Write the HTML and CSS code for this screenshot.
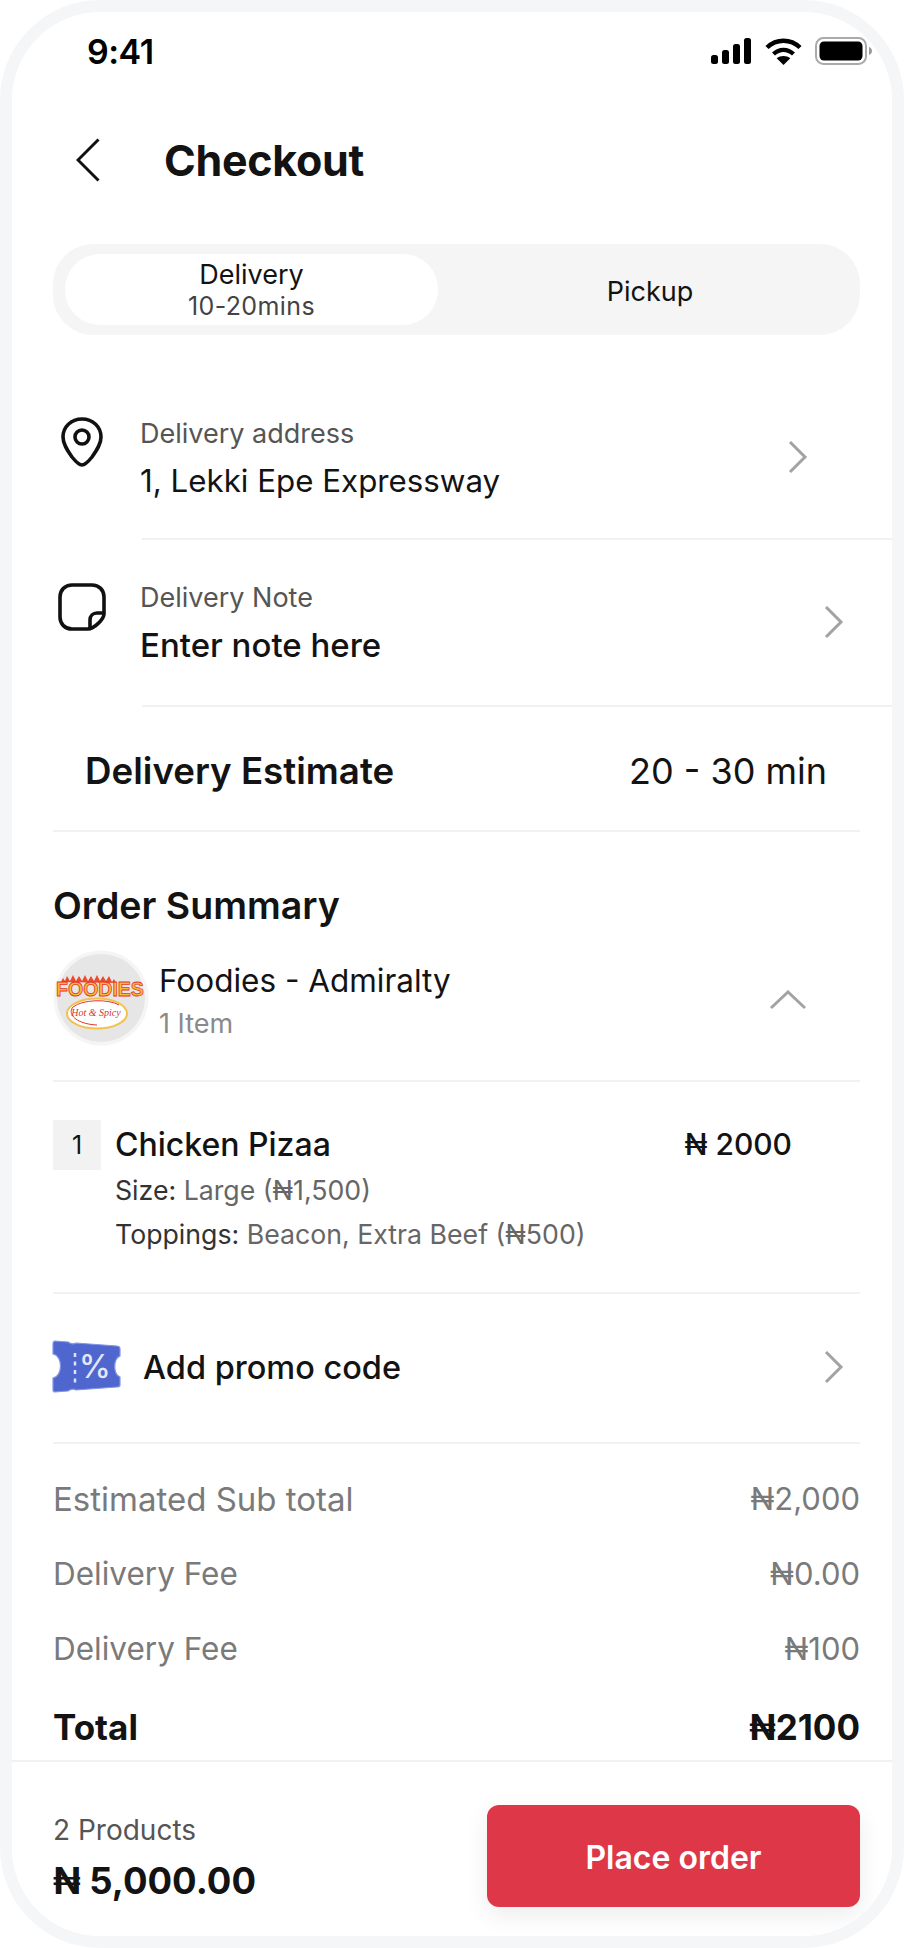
FILE: index.html
```html
<!DOCTYPE html>
<html lang="en">
<head>
  <meta charset="UTF-8" />
  <title>Checkout</title>
  <meta name="viewport" content="width=device-width, initial-scale=1.0" />
  <link rel="stylesheet" href="styles.css">
</head>
<body>
  <div class="phone">

    <div class="status-bar">
      <span class="time">9:41</span>
      <div class="status-icons">
        <svg width="41" height="26" viewBox="0 0 41 26"><rect x="0" y="17" width="7" height="9" rx="2.5"/><rect x="11" y="12" width="7" height="14" rx="2.5"/><rect x="22" y="6" width="7" height="20" rx="2.5"/><rect x="33" y="0" width="7" height="26" rx="2.5"/></svg>
        <svg width="37" height="27" viewBox="0 0 37 27" fill="none" stroke="#000" stroke-width="4.4"><path d="M2 9.5C11.5 0.5 25.5 0.5 35 9.5"/><path d="M8.5 16C14.500 10.5 22.5 10.5 28.5 16"/><path d="M18.5 27l-6.8-6.8c3.8-3 9.8-3 13.600 0z" fill="#000" stroke="none"/></svg>
        <svg width="57" height="28" viewBox="0 0 57 28"><rect x="1" y="1" width="50" height="26" rx="7.5" fill="none" stroke="#aaa" stroke-width="2"/><rect x="4.5" y="4.5" width="43" height="19" rx="4.5"/><path d="M54 10v8c1.800-.6 3-2.200 3-4s-1.200-3.400-3-4z" fill="#999"/></svg>
      </div>
    </div>

    <header class="topbar">
      <svg class="back" width="24" height="44" viewBox="0 0 24 44" fill="none" stroke="#111" stroke-width="3"><path d="M22.500 1.500L2 22l20.500 20.500"/></svg>
      <h1>Checkout</h1>
    </header>

    <div class="tabs">
      <div class="tab active">
        <span class="tab-name">Delivery</span>
        <span class="tab-time">10-20mins</span>
      </div>
      <div class="tab pickup"><span class="tab-name">Pickup</span></div>
    </div>

    <div class="info-row address">
      <svg class="info-icon" width="44" height="50" viewBox="0 0 44 50" fill="none" stroke="#111" stroke-width="3.600"><path d="M22 2C11 2 3 10 3 20c0 7 4 13 9 20 4 5 7 8 10 8s6-3 10-8c5-7 9-13 9-20C41 10 33 2 22 2z"/><circle cx="22" cy="20" r="7"/></svg>
      <div class="info-text">
        <div class="info-label">Delivery address</div>
        <div class="info-value">1, Lekki Epe Expressway</div>
      </div>
      <svg class="chevron" width="20" height="34" viewBox="0 0 20 34" fill="none" stroke="#a3a3a3" stroke-width="3"><path d="M2 2l15 15L2 32"/></svg>
    </div>
    <div class="rule"></div>

    <div class="info-row note">
      <svg class="info-icon" width="48" height="48" viewBox="0 0 48 48" fill="none" stroke="#111" stroke-width="3.600"><path d="M14 2h20c7 0 12 5 12 12v17c0 5-10 15-16 15H14C7 46 2 41 2 34V14C2 7 7 2 14 2z"/><path d="M46 30h-7c-4 0-7 3-7 7v9"/></svg>
      <div class="info-text">
        <div class="info-label">Delivery Note</div>
        <div class="info-value medium">Enter note here</div>
      </div>
      <svg class="chevron" width="20" height="34" viewBox="0 0 20 34" fill="none" stroke="#a3a3a3" stroke-width="3"><path d="M2 2l15 15L2 32"/></svg>
    </div>
    <div class="rule"></div>

    <div class="section">
      <div class="estimate">
        <span class="estimate-title">Delivery Estimate</span>
        <span class="estimate-time">20 - 30 min</span>
      </div>

      <h2>Order Summary</h2>
      <div class="store">
        <svg class="store-logo" width="96" height="96" viewBox="0 0 96 96">
          <circle cx="48" cy="48" r="47.500" fill="#f5f5f5"/>
          <circle cx="48" cy="48" r="44" fill="#e6e6e6"/>
          <path d="M8 32l2-4 2 3 2-5 3 5 3-6 3 6 3-5 3 5 3-6 3 6 3-5 3 5 3-6 3 6 3-5 3 5 3-5 3 6 2-3 2 4z" fill="#ec4a2c"/>
          <text class="logo-word" x="47" y="46" text-anchor="middle">FOODIES</text>
          <ellipse cx="44" cy="63.500" rx="30" ry="15" fill="#fff" stroke="#f2c14e" stroke-width="2"/>
          <path d="M66 55C56 49 30 49 20 57c-6 7 3 17 24 18" fill="none" stroke="#e5352b" stroke-width="1"/>
          <text class="logo-tag" x="43" y="66" text-anchor="middle">Hot &amp; Spicy</text>
        </svg>
        <div class="store-text">
          <div class="store-name">Foodies - Admiralty</div>
          <div class="store-count">1 Item</div>
        </div>
        <svg class="collapse" width="38" height="20" viewBox="0 0 38 20" fill="none" stroke="#a3a3a3" stroke-width="3"><path d="M2 18L19 2l17 16"/></svg>
      </div>

      <div class="item">
        <div class="qty">1</div>
        <div class="item-info">
          <div class="item-head">
            <span class="item-name">Chicken Pizaa</span>
            <span class="item-price">₦ 2000</span>
          </div>
          <div class="item-option"><span class="option-key">Size:</span> Large (₦1,500)</div>
          <div class="item-option"><span class="option-key">Toppings:</span> Beacon, Extra Beef (₦500)</div>
        </div>
      </div>

      <div class="promo">
        <svg class="ticket" width="72" height="54" viewBox="0 0 72 54">
          <path d="M4 1l13 1q4 3 8 1l41 3q3 0 3 3v7c-7 3-7 18 0 21v8q0 2-3 2l-41 3q-4-2-8 1L4 52q-2 0-2-2V38c10-2 10-22 0-24V4q0-3 2-3z" fill="#4f66cf" stroke="#8396e6" stroke-width="1.200"/>
          <path d="M24 13v30" stroke="#dfe3f7" stroke-width="2.500" stroke-dasharray="4 4.500"/>
          <text class="ticket-pct" x="44" y="38" text-anchor="middle">%</text>
        </svg>
        <span class="promo-text">Add promo code</span>
        <svg class="chevron" width="20" height="34" viewBox="0 0 20 34" fill="none" stroke="#a3a3a3" stroke-width="3"><path d="M2 2l15 15L2 32"/></svg>
      </div>

      <div class="totals">
        <div class="line"><span>Estimated Sub total</span><span class="amount">₦2,000</span></div>
        <div class="line fee"><span>Delivery Fee</span><span class="amount">₦0.00</span></div>
        <div class="line fee"><span>Delivery Fee</span><span class="amount">₦100</span></div>
        <div class="line total"><span>Total</span><span>₦2100</span></div>
      </div>
    </div>

    <footer class="checkout-bar">
      <div class="bar-summary">
        <div class="bar-count">2 Products</div>
        <div class="bar-price">₦ 5,000.00</div>
      </div>
      <button class="place-order" type="button">Place order</button>
    </footer>

  </div>
</body>
</html>
```

FILE: styles.css
```css
:root {
  --ink: #131313;
  --muted: #7a7a7a;
  --label: #555;
  --line: #f1f1f1;
  --red: #de3848;
  --font: Inter, 'Noto Sans', 'Liberation Sans', sans-serif;
}

* {
  margin: 0;
  padding: 0;
  box-sizing: border-box;
}

html, body {
  width: 904px;
  height: 1948px;
  font-family: var(--font);
  color: var(--ink);
  background-color: #fff;
  overflow: hidden;
}

.phone {
  width: 904px;
  height: 1948px;
  border: 12px solid #f5f6f8;
  border-radius: 100px;
  display: flex;
  flex-direction: column;
  overflow: hidden;
}

.status-bar {
  height: 78px;
  padding: 0 20px 0 75px;
  display: flex;
  justify-content: space-between;
  align-items: center;
  flex-shrink: 0;
}

.time {
  font-size: 34px;
  font-weight: 600;
  color: #000;
  letter-spacing: -0.5px;
}

.status-icons {
  display: flex;
  align-items: center;
  gap: 13px;
}

.topbar {
  height: 140px;
  margin-bottom: 14px;
  padding-left: 64px;
  display: flex;
  align-items: center;
  flex-shrink: 0;
}

.topbar h1 {
  margin-left: 64px;
  font-size: 43px;
  font-weight: 700;
  letter-spacing: -0.3px;
}

.tabs {
  height: 91px;
  margin: 0 32px 0 41px;
  padding: 10px 12px;
  background-color: #f5f5f5;
  border-radius: 40px;
  display: flex;
  flex-shrink: 0;
}

.tab {
  display: flex;
  flex-direction: column;
  align-items: center;
  justify-content: center;
}

.tab.active {
  width: 373px;
  background-color: #fff;
  border-radius: 35px;
}

.tab.pickup {
  flex: 1;
  padding-left: 14px;
  padding-top: 4px;
}

.tab-name {
  font-size: 27px;
  line-height: 33px;
}

.tab-time {
  font-size: 25px;
  line-height: 31px;
  letter-spacing: 0.4px;
  color: #444;
}

.info-row {
  margin-left: 46px;
  display: flex;
  align-items: flex-start;
  flex-shrink: 0;
}

.info-row.address {
  padding-top: 82px;
  padding-bottom: 35px;
}

.info-row.note {
  padding-top: 41px;
  padding-bottom: 38px;
}

.info-icon {
  flex-shrink: 0;
}

.address .info-icon {
  margin-left: 2px;
  margin-right: 36px;
}

.note .info-icon {
  margin-top: 2px;
  margin-right: 34px;
}

.info-text {
  flex: 1;
}

.info-label {
  font-size: 27px;
  line-height: 34px;
  color: var(--label);
}

.info-value {
  margin-top: 8px;
  font-size: 31.300px;
  line-height: 44px;
}

.info-value.medium {
  font-size: 33px;
  font-weight: 500;
}

.address .chevron {
  margin: 23px 84px 0 0;
}

.note .chevron {
  margin: 24px 48px 0 0;
}

.rule {
  height: 2px;
  margin-left: 130px;
  background-color: var(--line);
  flex-shrink: 0;
}

.section {
  flex: 1;
  padding: 0 32px 0 41px;
  display: flex;
  flex-direction: column;
}

.estimate {
  height: 125px;
  padding: 4px 33px 0 32px;
  display: flex;
  justify-content: space-between;
  align-items: center;
  border-bottom: 2px solid var(--line);
  flex-shrink: 0;
}

.estimate-title {
  font-size: 36.700px;
  font-weight: 600;
}

.estimate-time {
  font-size: 36px;
}

h2 {
  margin-top: 44px;
  font-size: 37.500px;
  line-height: 60px;
  font-weight: 600;
}

.store {
  height: 146px;
  padding-top: 14px;
  display: flex;
  align-items: flex-start;
  border-bottom: 2px solid var(--line);
  flex-shrink: 0;
}

.store-logo {
  flex-shrink: 0;
}

.store-text {
  flex: 1;
  margin-left: 10px;
}

.store-name {
  font-size: 31.500px;
  line-height: 40px;
  margin-top: 11px;
}

.store-count {
  font-size: 27px;
  line-height: 34px;
  margin-top: 6px;
  color: #8a8a8a;
}

.collapse {
  margin: 40px 53px 0 0;
}

.logo-word {
  font-family: 'Liberation Sans', sans-serif;
  font-size: 19.500px;
  font-weight: 700;
  fill: #f9bc35;
  stroke: #e5352b;
  stroke-width: 0.800;
}

.logo-tag {
  font-family: 'Liberation Serif', serif;
  font-size: 10px;
  font-style: italic;
  fill: #d6342c;
}

.item {
  height: 212px;
  padding-top: 38px;
  display: flex;
  border-bottom: 2px solid var(--line);
  flex-shrink: 0;
}

.qty {
  width: 48px;
  height: 50px;
  background-color: #f2f2f2;
  font-size: 25px;
  display: flex;
  align-items: center;
  justify-content: center;
  flex-shrink: 0;
}

.item-info {
  flex: 1;
  margin-left: 14px;
}

.item-head {
  height: 48px;
  padding-right: 68px;
  display: flex;
  justify-content: space-between;
  align-items: center;
  font-weight: 500;
}

.item-name {
  font-size: 32px;
}

.item-price {
  font-size: 30px;
}

.item-option {
  font-size: 26.700px;
  line-height: 44px;
  color: #666;
}

.option-key {
  color: #333;
}

.promo {
  height: 150px;
  padding-bottom: 2px;
  display: flex;
  align-items: center;
  border-bottom: 2px solid var(--line);
  flex-shrink: 0;
}

.ticket {
  margin-left: -2px;
  flex-shrink: 0;
}

.ticket-pct {
  font-family: var(--font);
  font-size: 32px;
  font-weight: 500;
  fill: #e4e7f8;
}

.promo-text {
  flex: 1;
  margin-left: 20px;
  font-size: 32.500px;
  font-weight: 500;
}

.promo .chevron {
  margin-right: 16px;
}

.totals {
  padding-top: 17px;
}

.line {
  height: 75px;
  display: flex;
  justify-content: space-between;
  align-items: center;
  font-size: 33px;
  color: var(--muted);
}

.line.fee {
  font-size: 31.500px;
}

.amount {
  font-size: 31px;
}

.line.total {
  height: 66px;
  margin-top: 8px;
  font-size: 35px;
  font-weight: 700;
  color: var(--ink);
}

.checkout-bar {
  height: 176px;
  padding: 0 32px 0 41px;
  border-top: 2px solid var(--line);
  display: flex;
  justify-content: space-between;
  align-items: flex-start;
  background-color: #fff;
  flex-shrink: 0;
}

.bar-summary {
  padding-top: 50px;
}

.bar-count {
  font-size: 28px;
  line-height: 36px;
  color: var(--label);
}

.bar-price {
  margin-top: 12px;
  font-size: 36.500px;
  line-height: 42px;
  font-weight: 700;
}

.place-order {
  width: 373px;
  height: 102px;
  margin-top: 43px;
  padding-top: 2px;
  border: none;
  border-radius: 12px;
  background-color: var(--red);
  color: #fff;
  font-family: var(--font);
  font-size: 32px;
  font-weight: 600;
  box-shadow: 0 8px 24px rgba(0, 0, 0, 0.08);
}
```
